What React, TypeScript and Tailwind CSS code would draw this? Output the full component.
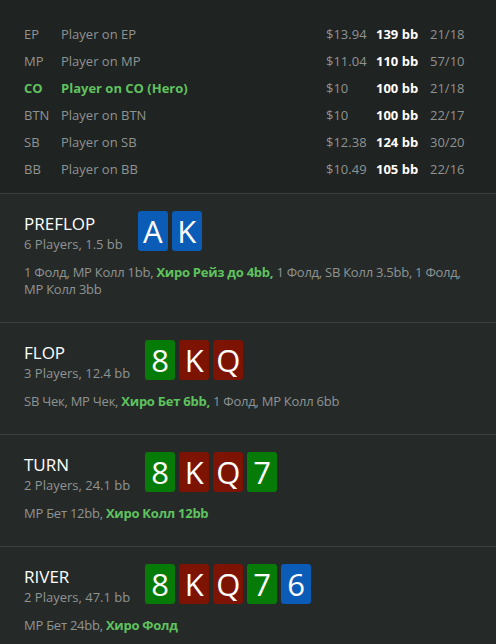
const players = [
  { pos: "EP", name: "Player on EP", money: "$13.94", bb: "139 bb", stats: "21/18" },
  { pos: "MP", name: "Player on MP", money: "$11.04", bb: "110 bb", stats: "57/10" },
  { pos: "CO", name: "Player on CO (Hero)", money: "$10", bb: "100 bb", stats: "21/18", hero: true },
  { pos: "BTN", name: "Player on BTN", money: "$10", bb: "100 bb", stats: "22/17" },
  { pos: "SB", name: "Player on SB", money: "$12.38", bb: "124 bb", stats: "30/20" },
  { pos: "BB", name: "Player on BB", money: "$10.49", bb: "105 bb", stats: "22/16" },
];

type Suit = "blue" | "green" | "red";

const suitBg: Record<Suit, string> = {
  blue: "bg-[#0b5cb6]",
  green: "bg-[#077b07]",
  red: "bg-[#7d1302]",
};

type Street = {
  title: string;
  sub: string;
  cards: { rank: string; suit: Suit }[];
  actions: { text: string; hero?: boolean }[];
};

const board = [
  { rank: "8", suit: "green" as Suit },
  { rank: "K", suit: "red" as Suit },
  { rank: "Q", suit: "red" as Suit },
  { rank: "7", suit: "green" as Suit },
  { rank: "6", suit: "blue" as Suit },
];

const streets: Street[] = [
  {
    title: "PREFLOP",
    sub: "6 Players, 1.5 bb",
    cards: [
      { rank: "A", suit: "blue" },
      { rank: "K", suit: "blue" },
    ],
    actions: [
      { text: "1 Фолд, MP Колл 1bb, " },
      { text: "Хиро Рейз до 4bb,", hero: true },
      { text: " 1 Фолд, SB Колл 3.5bb, 1 Фолд, MP Колл 3bb" },
    ],
  },
  {
    title: "FLOP",
    sub: "3 Players, 12.4 bb",
    cards: board.slice(0, 3),
    actions: [
      { text: "SB Чек, MP Чек, " },
      { text: "Хиро Бет 6bb,", hero: true },
      { text: " 1 Фолд, MP Колл 6bb" },
    ],
  },
  {
    title: "TURN",
    sub: "2 Players, 24.1 bb",
    cards: board.slice(0, 4),
    actions: [{ text: "MP Бет 12bb, " }, { text: "Хиро Колл 12bb", hero: true }],
  },
  {
    title: "RIVER",
    sub: "2 Players, 47.1 bb",
    cards: board,
    actions: [{ text: "MP Бет 24bb, " }, { text: "Хиро Фолд", hero: true }],
  },
];

function Card({ rank, suit }: { rank: string; suit: Suit }) {
  return (
    <div
      className={`flex h-10 w-[30px] items-center justify-center rounded-[3px] text-[31px] leading-none text-white ${suitBg[suit]}`}
    >
      {rank}
    </div>
  );
}

export default function App() {
  return (
    <div
      className="min-h-screen w-[496px] bg-[#252a29] text-[13px] text-[#8f9392]"
      style={{ fontFamily: "'Open Sans', 'Noto Sans', sans-serif" }}
    >
      <div className="bg-[#1f2321] px-6 pb-[10px] pt-[21px]">
        {players.map((p) => (
          <div
            key={p.pos}
            className="grid h-[27px] grid-cols-[37px_265px_50px_54px_auto] items-center"
          >
            <span className={p.hero ? "font-bold text-[#5fc25f]" : ""}>{p.pos}</span>
            <span className={p.hero ? "font-bold text-[#5fc25f]" : ""}>{p.name}</span>
            <span>{p.money}</span>
            <span className="font-bold text-white">{p.bb}</span>
            <span>{p.stats}</span>
          </div>
        ))}
      </div>

      {streets.map((s) => (
        <section key={s.title} className="border-t border-[#3b403f] px-6 pb-6 pt-[17px]">
          <div className="flex h-10 items-start gap-[15px]">
            <div className="pt-[2px]">
              <div className="text-[17px] leading-[22px] text-white">{s.title}</div>
              <div className="leading-[18px]">{s.sub}</div>
            </div>
            <div className="flex gap-1">
              {s.cards.map((c, i) => (
                <Card key={i} rank={c.rank} suit={c.suit} />
              ))}
            </div>
          </div>
          <p className="mt-[13px] leading-[17px] tracking-[-0.25px]">
            {s.actions.map((a, i) => (
              <span key={i} className={a.hero ? "font-bold text-[#5fc25f]" : ""}>
                {a.text}
              </span>
            ))}
          </p>
        </section>
      ))}
    </div>
  );
}
